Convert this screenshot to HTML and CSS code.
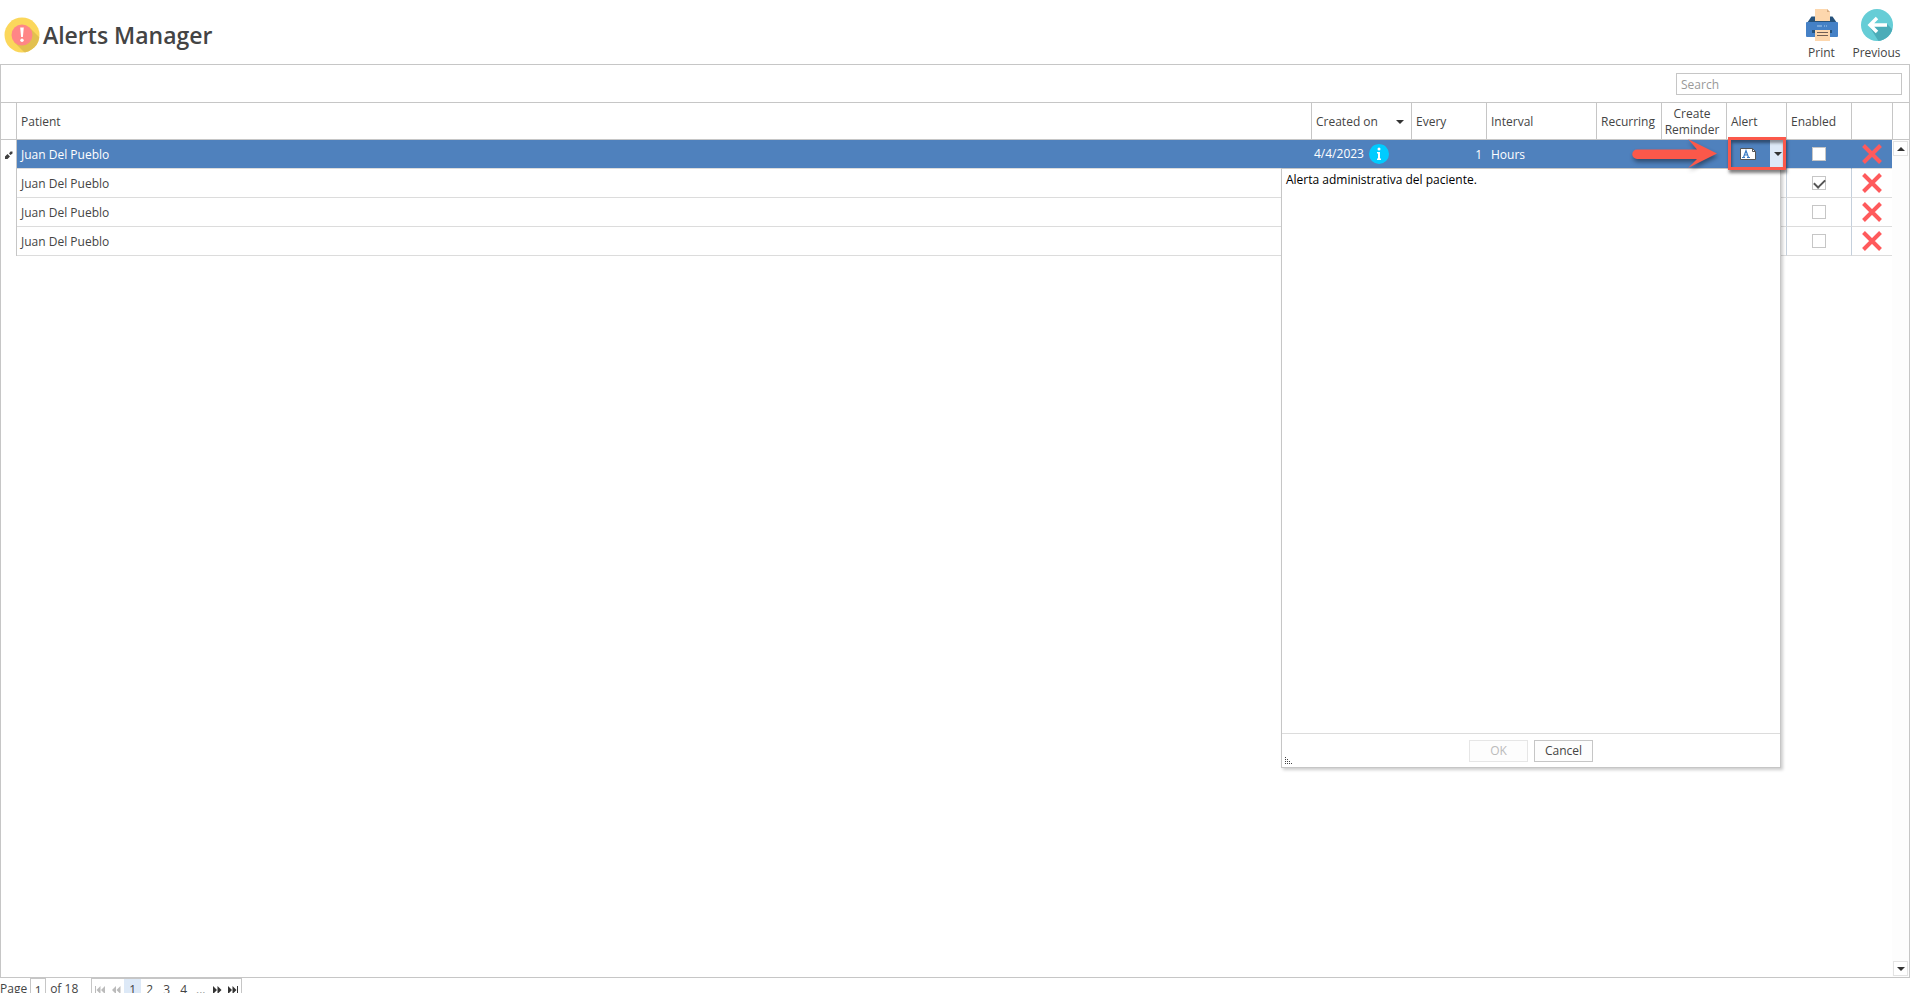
FILE: index.html
```html
<!DOCTYPE html>
<html lang="en">

<head>
    <meta charset="UTF-8">
    <meta name="viewport" content="width=device-width, initial-scale=1.0">
    <title>Alerts Manager</title>
    <link rel="stylesheet" href="styles.css">
</head>

<body>
    <!-- shared icons -->
    <svg class="sprite" aria-hidden="true">
        <symbol id="icon-delete" viewBox="0 0 20 20">
            <path d="M1.5 1.5 18.5 18.5M18.5 1.5 1.5 18.5" fill="none" stroke="#ff5a5c" stroke-width="4" />
        </symbol>
    </svg>

    <header class="page-header">
        <svg class="title-icon" viewBox="0 0 36 36" aria-hidden="true">
            <clipPath id="logo-clip"><circle cx="18" cy="18" r="17.5" /></clipPath>
            <circle cx="18" cy="18" r="17.5" fill="#fbd75b" />
            <path d="M25.5 10.5 36 21V36H21L10.5 25.5z" fill="#e2c04f" clip-path="url(#logo-clip)" />
            <circle cx="18" cy="18" r="10.5" fill="#ff8686" />
            <path d="M16.2 10.5h3.6l-.9 9.5h-1.8z" fill="#fff" />
            <circle cx="18" cy="23.3" r="1.7" fill="#fff" />
        </svg>
        <h1>Alerts Manager</h1>
        <nav class="toolbar">
            <button class="tool-btn" type="button">
                <svg viewBox="0 0 32 32" aria-hidden="true">
                    <path d="M5.500 7.500h21L31 14H1z" fill="#27537c" />
                    <path d="M9 0h12l3 3v9H9z" fill="#fdd7ad" />
                    <path d="M21 0v3h3z" fill="#d6ab80" />
                    <path d="M0 14q0-1 1-1h30q1 0 1 1v13q0 1-1 1H1q-1 0-1-1z" fill="#4581c6" />
                    <path d="M11 17h5M18 17h1M20 17h1" stroke="#a9cdf0" />
                    <path d="M6 21h20v3H6z" fill="#27537c" />
                    <path d="M9 21h15v11H9z" fill="#fdd7ad" />
                    <path d="M11 23.500h11M11 26.500h11" stroke="#715f55" />
                </svg>
                Print
            </button>
            <button class="tool-btn" type="button">
                <svg viewBox="0 0 32 32" aria-hidden="true">
                    <clipPath id="prev-clip"><circle cx="16" cy="16" r="16" /></clipPath>
                    <circle cx="16" cy="16" r="16" fill="#66cdd6" />
                    <path d="M26 15 36 25 30 36H20L8 17z" fill="#4bacb8" clip-path="url(#prev-clip)" />
                    <path d="M26 16H9M16 9l-7 7 7 7" fill="none" stroke="#fff" stroke-width="3.500" />
                </svg>
                Previous
            </button>
        </nav>
    </header>

    <main class="grid">
        <div class="search-bar">
            <input type="text" class="search" placeholder="Search" aria-label="Search">
        </div>

        <table class="grid-table grid-head">
            <colgroup>
                <col class="col-mark"><col><col class="col-created"><col class="col-every"><col class="col-interval">
                <col class="col-check"><col class="col-check"><col class="col-alert"><col class="col-check">
                <col class="col-delete-head"><col class="col-scroll">
            </colgroup>
            <thead>
                <tr>
                    <th></th>
                    <th>Patient</th>
                    <th><span class="sorted">Created on <i class="caret"></i></span></th>
                    <th>Every</th>
                    <th>Interval</th>
                    <th>Recurring</th>
                    <th class="wrap">Create Reminder</th>
                    <th>Alert</th>
                    <th>Enabled</th>
                    <th></th>
                    <th></th>
                </tr>
            </thead>
        </table>

        <div class="grid-body">
            <div class="grid-rows">
                <table class="grid-table">
                    <colgroup>
                        <col class="col-mark"><col><col class="col-created"><col class="col-every"><col class="col-interval">
                        <col class="col-check"><col class="col-check"><col class="col-alert"><col class="col-check">
                        <col class="col-delete">
                    </colgroup>
                    <tbody>
                        <tr class="selected">
                            <td class="mark">
                                <svg class="pencil" viewBox="0 0 8 8" aria-hidden="true">
                                    <path d="M0 8V5.500L2.500 3 5 5.500 2.500 8zM4 2.500 5.500.5h2v2L5.500 4z" fill="#404040" />
                                </svg>
                            </td>
                            <td>Juan Del Pueblo</td>
                            <td class="created">
                                <span class="created-value">4/4/2023
                                    <svg class="info" viewBox="0 0 20 20" aria-hidden="true">
                                        <circle cx="10" cy="10" r="10" fill="#00ccff" />
                                        <circle cx="10" cy="5" r="1.500" fill="#fff" />
                                        <path d="M8 8h3v6.500h1V16H8v-1.500h1V9.500H8z" fill="#fff" />
                                    </svg>
                                </span>
                            </td>
                            <td class="number">1</td>
                            <td>Hours</td>
                            <td></td>
                            <td></td>
                            <td class="alert-cell">
                                <div class="alert-editor">
                                    <svg class="memo" viewBox="0 0 16 12" aria-hidden="true">
                                        <path d="M.5.5h12l3 3v8H.5z" fill="#fff" stroke="#555" />
                                        <path d="M12.500.5v3h3" fill="none" stroke="#555" />
                                        <path d="M2 9.500h3M7 9.500h3M3.500 9.500 6 2.500 8.500 9.500M4.500 7h3" fill="none" stroke="#3b7cc4" stroke-width="1.200" />
                                    </svg>
                                    <button class="drop-btn" type="button" aria-label="Open alert"><i class="caret"></i></button>
                                </div>

                                <div class="popup">
                                    <textarea class="memo-text" aria-label="Alert">Alerta administrativa del paciente.</textarea>
                                    <div class="popup-footer">
                                        <button class="btn" type="button" disabled>OK</button>
                                        <button class="btn" type="button">Cancel</button>
                                        <svg class="grip" viewBox="0 0 8 8" aria-hidden="true">
                                            <path d="M0 .5h1M0 2.500h1M2 2.500h1M0 4.500h1M2 4.500h1M4 4.500h1M0 6.500h1M2 6.500h1M4 6.500h1M6 6.500h1" stroke="#444" />
                                        </svg>
                                    </div>
                                </div>

                                <!-- callout over the drop-down button -->
                                <div class="callout-box"></div>
                                <svg class="callout-arrow" viewBox="0 0 86 30" aria-hidden="true">
                                    <path d="M5 10.500h60L56 0l29 14.500L56 29l9-9H5a4.700 4.700 0 0 1 0-9.500z" fill="#fb584a" />
                                </svg>
                            </td>
                            <td class="center"><input type="checkbox" aria-label="Enabled"></td>
                            <td class="center"><button class="delete" type="button" aria-label="Delete"><svg viewBox="0 0 20 20"><use href="#icon-delete" /></svg></button></td>
                        </tr>
                        <tr>
                            <td class="mark"></td>
                            <td>Juan Del Pueblo</td>
                            <td></td>
                            <td></td>
                            <td></td>
                            <td></td>
                            <td></td>
                            <td></td>
                            <td class="center"><input type="checkbox" aria-label="Enabled" checked></td>
                            <td class="center"><button class="delete" type="button" aria-label="Delete"><svg viewBox="0 0 20 20"><use href="#icon-delete" /></svg></button></td>
                        </tr>
                        <tr>
                            <td class="mark"></td>
                            <td>Juan Del Pueblo</td>
                            <td></td>
                            <td></td>
                            <td></td>
                            <td></td>
                            <td></td>
                            <td></td>
                            <td class="center"><input type="checkbox" aria-label="Enabled"></td>
                            <td class="center"><button class="delete" type="button" aria-label="Delete"><svg viewBox="0 0 20 20"><use href="#icon-delete" /></svg></button></td>
                        </tr>
                        <tr>
                            <td class="mark"></td>
                            <td>Juan Del Pueblo</td>
                            <td></td>
                            <td></td>
                            <td></td>
                            <td></td>
                            <td></td>
                            <td></td>
                            <td class="center"><input type="checkbox" aria-label="Enabled"></td>
                            <td class="center"><button class="delete" type="button" aria-label="Delete"><svg viewBox="0 0 20 20"><use href="#icon-delete" /></svg></button></td>
                        </tr>
                    </tbody>
                </table>
            </div>
            <div class="scrollbar">
                <button type="button" aria-label="Scroll up"><i class="caret up"></i></button>
                <button type="button" aria-label="Scroll down"><i class="caret"></i></button>
            </div>
        </div>
    </main>

    <footer class="pager">
        <label for="page">Page</label>
        <input type="text" id="page" class="page-input" value="1">
        <span>of 18</span>
        <div class="pages">
            <button type="button" class="nav-btn" aria-label="First page" disabled><svg viewBox="0 0 10 8"><path d="M0 0h1v8H0zM5.500 0v8L1.500 4zM10 0v8L6 4z" /></svg></button>
            <button type="button" class="nav-btn" aria-label="Previous page" disabled><svg viewBox="0 0 10 8"><path d="M5 0v8L1 4zM9.500 0v8l-4-4z" /></svg></button>
            <button type="button" class="current">1</button>
            <button type="button">2</button>
            <button type="button">3</button>
            <button type="button">4</button>
            <button type="button">...</button>
            <button type="button" class="nav-btn" aria-label="Next page"><svg viewBox="0 0 10 8"><path d="M1 0v8l4-4zM5.500 0v8l4-4z" /></svg></button>
            <button type="button" class="nav-btn" aria-label="Last page"><svg viewBox="0 0 10 8"><path d="M0 0v8l4-4zM4.500 0v8l4-4zM9 0h1v8H9z" /></svg></button>
        </div>
    </footer>
</body>

</html>
```

FILE: styles.css
```css
* {
    box-sizing: border-box;
}

body {
    margin: 0;
    height: 100vh;
    display: flex;
    flex-direction: column;
    overflow: hidden;
    background-color: #fff;
    color: #444;
    font-family: "Open Sans", "Noto Sans", sans-serif;
    font-size: 12px;
    line-height: 16px;
}

button,
input,
textarea {
    font: inherit;
    color: inherit;
    margin: 0;
}

button {
    border: none;
    background: none;
    padding: 0;
}

svg {
    display: block;
}

.sprite {
    display: none;
}

.page-header {
    flex: none;
    height: 64px;
    display: flex;
    align-items: center;
    padding: 6px 7px 0 4px;
}

.title-icon {
    width: 36px;
    height: 36px;
    margin-right: 3px;
}

h1 {
    margin: 0;
    font-size: 23px;
    line-height: 32px;
    font-weight: 600;
}

.toolbar {
    margin-left: auto;
    display: flex;
}

.tool-btn {
    width: 55px;
    display: flex;
    flex-direction: column;
    align-items: center;
    gap: 4px;
}

.tool-btn svg {
    width: 32px;
    height: 32px;
}

.grid {
    flex: 1;
    min-height: 0;
    display: flex;
    flex-direction: column;
    margin-right: 1px;
    border: 1px solid #c6c6c6;
}

.search-bar {
    height: 37px;
    flex: none;
    display: flex;
    justify-content: flex-end;
    align-items: center;
    padding: 1px 7px 0;
}

.search {
    width: 226px;
    height: 22px;
    padding: 0 4px;
    border: 1px solid #c6c6c6;
}

.search::placeholder {
    color: #999;
}

.grid-table {
    width: 100%;
    table-layout: fixed;
    border-collapse: separate;
    border-spacing: 0;
}

.col-mark { width: 16px; }
.col-created { width: 100px; }
.col-every { width: 75px; }
.col-interval { width: 110px; }
.col-check { width: 65px; }
.col-alert { width: 60px; }
.col-delete { width: 40px; }
.col-delete-head { width: 41px; }
.col-scroll { width: 16px; }

.grid-head th {
    height: 38px;
    padding: 2px 4px 0;
    border: solid #c6c6c6;
    border-width: 1px 1px 1px 0;
    font-weight: normal;
    text-align: left;
    white-space: nowrap;
}

.grid-head th:last-child {
    border-right: none;
}

.grid-head .wrap {
    white-space: normal;
    text-align: center;
    padding: 2px 4px 0 0;
}

.sorted {
    display: flex;
    justify-content: space-between;
    align-items: center;
    padding-right: 3px;
}

.caret {
    display: block;
    border: 4px solid transparent;
    border-top-color: #333;
    border-bottom: none;
}

.caret.up {
    border-top: none;
    border-bottom: 4px solid #333;
}

.grid-body {
    flex: 1;
    min-height: 0;
    display: flex;
}

.grid-rows {
    flex: 1;
}

.grid-rows td {
    height: 29px;
    padding: 2px 4px 0;
    border-bottom: 1px solid #dcdcdc;
    border-right: 1px solid #c5d0dc;
    white-space: nowrap;
}

.grid-rows td:last-child {
    border-right: none;
}

.grid-rows td:nth-child(2) {
    border-right: none;
}

.grid-rows .mark {
    padding: 0 4px;
    border-bottom: none;
    border-right-color: #c6c6c6;
}

.grid-rows .center {
    padding: 0;
    text-align: center;
}

.selected td:not(.mark) {
    background-color: #4f81bd;
    border-right-color: #4f81bd;
    color: #fff;
}

.grid-rows .number {
    text-align: right;
}

.grid-rows .created {
    padding: 0 2px;
}

.pencil {
    width: 8px;
    height: 8px;
}

.created-value {
    display: flex;
    align-items: center;
    gap: 5px;
}

.info {
    width: 20px;
    height: 20px;
}

.grid-rows .alert-cell {
    position: relative;
    padding: 0 1px;
}

.alert-editor {
    display: flex;
    justify-content: space-between;
    align-items: center;
    padding-left: 12px;
}

.memo {
    width: 16px;
    height: 12px;
}

.drop-btn {
    width: 15px;
    height: 28px;
    display: flex;
    align-items: center;
    justify-content: center;
    background-color: #dde9f7;
}

.popup {
    position: absolute;
    top: 100%;
    right: 5px;
    z-index: 1;
    width: 500px;
    height: 600px;
    display: flex;
    flex-direction: column;
    background-color: #fff;
    border: 1px solid #c6c6c6;
    box-shadow: 2px 2px 3px rgba(0, 0, 0, 0.2);
    color: #444;
}

.memo-text {
    flex: 1;
    padding: 3px 4px;
    border: none;
    resize: none;
    color: #000;
}

.popup-footer {
    position: relative;
    height: 34px;
    display: flex;
    justify-content: center;
    align-items: center;
    gap: 6px;
    border-top: 1px solid #dcdcdc;
}

.btn {
    width: 59px;
    height: 22px;
    background-color: #fdfdfd;
    border: 1px solid #c6c6c6;
}

.btn:disabled {
    border-color: #e6e6e6;
    color: #bbb;
}

.grip {
    position: absolute;
    left: 3px;
    bottom: 2px;
    width: 8px;
    height: 8px;
}

.callout-box {
    position: absolute;
    inset: -3px 0 -2px 1px;
    z-index: 2;
    border: 3px solid #fb584a;
    box-shadow: 1px 3px 3px rgba(0, 0, 0, 0.5), inset 1px 3px 3px rgba(0, 0, 0, 0.4);
}

.callout-arrow {
    position: absolute;
    top: -1px;
    right: 68px;
    z-index: 2;
    width: 86px;
    height: 30px;
    overflow: visible;
    filter: drop-shadow(1px 3px 2px rgba(0, 0, 0, 0.4));
}

input[type="checkbox"] {
    appearance: none;
    display: block;
    width: 14px;
    height: 14px;
    margin: 0 auto;
    border: 1px solid #c6c6c6;
    background-color: #fff;
}

input[type="checkbox"]:checked::after {
    content: "";
    display: block;
    width: 5px;
    height: 9px;
    margin: 0 auto;
    border: solid #555;
    border-width: 0 2px 2px 0;
    transform: rotate(45deg);
}

.delete {
    display: block;
    margin: 0 auto;
}

.delete svg {
    width: 20px;
    height: 20px;
}

.scrollbar {
    width: 17px;
    display: flex;
    flex-direction: column;
    justify-content: space-between;
    padding: 1px;
    background-color: #fdfdfd;
}

.scrollbar button {
    height: 15px;
    display: flex;
    align-items: center;
    justify-content: center;
    background-color: #fff;
    border: 1px solid #e3e3e3;
}

.pager {
    flex: none;
    height: 15px;
    display: flex;
    align-items: flex-start;
    line-height: 22px;
}

.page-input {
    width: 16px;
    height: 24px;
    margin: 0 4px 0 3px;
    padding: 0;
    border: 1px solid #c6c6c6;
    text-align: center;
}

.pages {
    display: flex;
    margin-left: 13px;
    border: 1px solid #c6c6c6;
}

.pages button {
    width: 17px;
    height: 22px;
    display: flex;
    align-items: center;
    justify-content: center;
}

.pages .nav-btn {
    width: 16px;
}

.pages .current {
    background-color: #dde9f7;
}

.pages svg {
    width: 10px;
    height: 8px;
    fill: #333;
}

.pages button:disabled svg {
    fill: #bbb;
}
```
